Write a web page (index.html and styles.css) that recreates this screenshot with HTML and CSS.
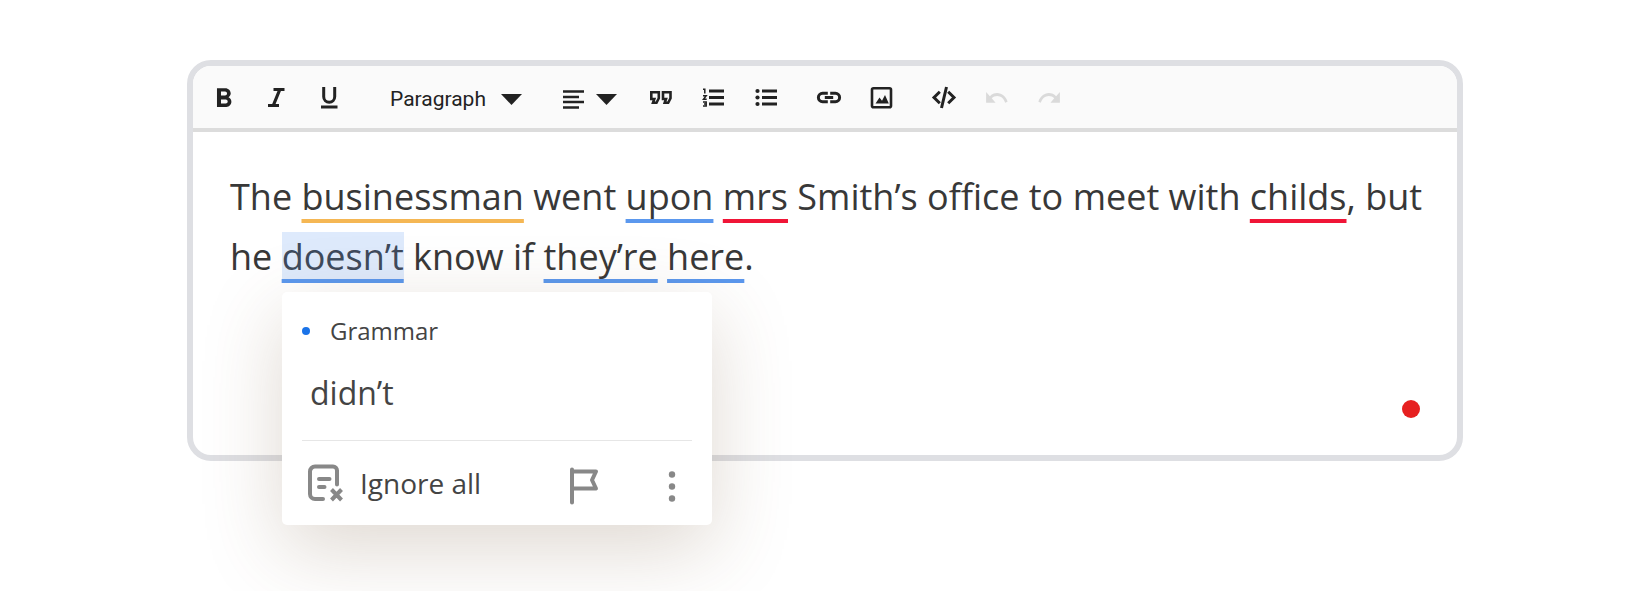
FILE: index.html
```html
<!DOCTYPE html>
<html lang="en">
<head>
<meta charset="utf-8">
<title>Editor</title>
<link rel="stylesheet" href="styles.css">
</head>
<body>
<main class="editor">
  <div class="toolbar" role="toolbar" aria-label="Formatting">
    <div class="group">
      <button class="tool" type="button" aria-label="Bold"><svg class="icon" viewBox="0 0 36 36"><path transform="translate(2.6 3.8) scale(1.34)" d="M15.6 10.79c.97-.67 1.65-1.77 1.65-2.79 0-2.26-1.75-4-4-4H7v14h7.04c2.09 0 3.71-1.7 3.71-3.79 0-1.52-.86-2.82-2.15-3.42zM10 6.5h3c.83 0 1.5.67 1.5 1.5s-.67 1.5-1.5 1.5h-3v-3zm3.5 9H10v-3h3.5c.83 0 1.5.67 1.5 1.5s-.67 1.5-1.5 1.5z"/></svg></button>
      <button class="tool" type="button" aria-label="Italic"><svg class="icon" viewBox="0 0 36 36"><path d="M15.5 9H26.500v3H22.900L17.600 25H21v3H10v-3h4.200L19.500 12h-4z"/></svg></button>
      <button class="tool" type="button" aria-label="Underline"><svg class="icon" viewBox="0 0 36 36"><path class="line thick" d="M12.700 8v9.700a5.500 5.500 0 0 0 11 0V8M10 28h16.500"/></svg></button>
    </div>
    <label class="style-picker">
      <select class="style-select" aria-label="Text style"><option>Paragraph</option></select>
      <svg class="caret" viewBox="0 0 21 12"><path d="M0 1h21L10.500 12z"/></svg>
    </label>
    <div class="group">
      <button class="align-tool" type="button" aria-label="Text alignment" aria-haspopup="true">
        <svg class="align-icon" viewBox="0 0 21 36"><path class="line" d="M0 12.500h21M0 18h16M0 23h21M0 28.500h16"/></svg>
        <svg class="caret" viewBox="0 0 21 12"><path d="M0 1h21L10.500 12z"/></svg>
      </button>
    </div>
    <div class="group">
      <button class="tool" type="button" aria-label="Block quote"><svg class="icon" viewBox="0 0 36 36"><path class="line" d="M8.300 13.300h7.500v6l-2.300 4.500h-3.500l1.300-3.800H8.300zM20 13.300h7.500v6l-2.300 4.500h-3.500l1.300-3.800H20z"/></svg></button>
      <button class="tool" type="button" aria-label="Numbered list"><svg class="icon" viewBox="0 0 36 36"><path class="line thick" d="M13 12h15M13 18.500h15M13 25h15"/><path class="line thin" d="M7 10.200h1.800v4.300M7 16.700h3.200l-2.700 3.600h3.200M7 23h3.200v4H7M8 25h2"/></svg></button>
      <button class="tool" type="button" aria-label="Bulleted list"><svg class="icon" viewBox="0 0 36 36"><path class="line thick" d="M13 12h15M13 18.500h15M13 25h15"/><circle cx="8.500" cy="12" r="2.100"/><circle cx="8.500" cy="18.500" r="2.100"/><circle cx="8.500" cy="25" r="2.100"/></svg></button>
    </div>
    <div class="group">
      <button class="tool" type="button" aria-label="Link"><svg class="icon" viewBox="0 0 36 36"><path class="line thick" d="M16.800 14.300h-5.200a4.200 4.200 0 0 0 0 8.400h5.200M19.200 14.300h5.200a4.200 4.200 0 0 1 0 8.400h-5.200M13.800 18.500h8.400"/></svg></button>
      <button class="tool" type="button" aria-label="Image"><svg class="icon" viewBox="0 0 36 36"><rect class="line" x="8" y="9.300" width="19" height="19" rx="1.500"/><path d="M11.500 24.500l4-6 2.500 3.200 3-5.700 3.800 8.500z"/></svg></button>
    </div>
    <div class="group">
      <button class="tool" type="button" aria-label="Source code"><svg class="icon" viewBox="0 0 36 36"><path class="line thick" d="M13.800 12.700L8 18.500l5.800 5.800M22.200 12.700l5.800 5.800-5.800 5.800M20.500 8l-5 21"/></svg></button>
      <button class="tool" type="button" aria-label="Undo" disabled><svg class="icon" viewBox="0 0 36 36"><path transform="translate(5 4.500) scale(1.050 1.200)" d="M12.500 8c-2.650 0-5.050.99-6.900 2.600L2 7v9h9l-3.620-3.620c1.390-1.160 3.160-1.880 5.120-1.880 3.540 0 6.550 2.310 7.600 5.500l2.370-.78C21.080 11.030 17.150 8 12.500 8z"/></svg></button>
      <button class="tool" type="button" aria-label="Redo" disabled><svg class="icon" viewBox="0 0 36 36"><path transform="translate(30 4.500) scale(-1.050 1.200)" d="M12.500 8c-2.650 0-5.050.99-6.900 2.600L2 7v9h9l-3.620-3.620c1.390-1.160 3.160-1.880 5.120-1.880 3.540 0 6.550 2.310 7.600 5.500l2.370-.78C21.080 11.030 17.150 8 12.500 8z"/></svg></button>
    </div>
  </div>
  <div class="content">
    <p class="text">The <span class="mark style">businessman</span> went <span class="mark grammar">upon</span> <span class="mark spelling">mrs</span> Smith’s office to meet with <span class="mark spelling">childs</span>, but he <span class="mark grammar active">doesn’t</span> know if <span class="mark grammar">they’re</span> <span class="mark grammar">here</span>.</p>
    <span class="status" role="status" aria-label="Problems found"></span>
  </div>
  <section class="popover" aria-label="Suggestion">
    <div class="category"><span class="dot"></span>Grammar</div>
    <button class="suggestion" type="button">didn’t</button>
    <div class="actions">
      <button class="ignore" type="button">
        <svg class="ignore-icon" viewBox="0 0 36 38"><path class="line bold" d="M16 35H8a5 5 0 0 1-5-5V7.500a5 5 0 0 1 5-5h18a4 4 0 0 1 4 4v14M12 15h10.500M12 23h5.500"/><path class="line bold cross" d="M24.500 25.500l10 10.500M34.500 25.500l-10 10.500"/></svg>
        Ignore all
      </button>
      <button class="action" type="button" aria-label="Report"><svg class="action-icon" viewBox="0 0 40 46"><path class="line bold" d="M8 9.500v33M8 11.500h24l-4 8.500 4 8.500H8"/></svg></button>
      <button class="action" type="button" aria-label="More options"><svg class="action-icon" viewBox="0 0 40 46"><circle cx="20" cy="14.500" r="3.200"/><circle cx="20" cy="26.500" r="3.200"/><circle cx="20" cy="38.500" r="3.200"/></svg></button>
    </div>
  </section>
</main>
</body>
</html>
```

FILE: styles.css
```css
* {
  box-sizing: border-box;
}

body {
  min-height: 100vh;
  margin: 0;
  padding: 60px 24px;
  background: #fff;
  color: #383838;
  font-family: "Open Sans", sans-serif;
}

button,
select {
  margin: 0;
  padding: 0;
  border: 0;
  background: none;
  color: inherit;
  font: inherit;
}

svg {
  display: block;
  flex: none;
  fill: currentColor;
}

.line {
  fill: none;
  stroke: currentColor;
  stroke-width: 2.600;
}

.thick {
  stroke-width: 3;
}

.thin {
  stroke-width: 1.500;
}

.bold {
  stroke-width: 4;
  stroke-linecap: round;
  stroke-linejoin: round;
}

.cross {
  stroke-linecap: butt;
}

.editor {
  position: relative;
  max-width: 1276px;
  margin: 0 auto;
  border: 6px solid #dedfe3;
  border-radius: 24px;
}

.toolbar {
  display: flex;
  align-items: center;
  gap: 26px;
  padding: 13px 12px;
  border-bottom: 4px solid #dcdcdc;
  border-radius: 18px 18px 0 0;
  background: #fafafa;
  color: #222;
}

.group {
  display: flex;
  gap: 17px;
}

.tool:disabled {
  color: #dadada;
}

.icon {
  width: 36px;
  height: 36px;
}

.style-picker {
  display: grid;
  grid-template-columns: auto 21px;
  align-items: center;
  padding: 0 15px 0 17px;
  font: 21px/28px Roboto, sans-serif;
}

.style-select {
  grid-area: 1 / 1 / 2 / 3;
  appearance: none;
  padding: 4px 36px 0 0;
}

.style-picker .caret {
  grid-area: 1 / 2;
  pointer-events: none;
}

.caret {
  width: 21px;
  height: 12px;
  margin-top: 3px;
}

.align-tool {
  display: flex;
  align-items: center;
  gap: 12px;
}

.align-icon {
  width: 21px;
  height: 36px;
}

.content {
  display: flex;
  flex-direction: column;
  justify-content: space-between;
  min-height: 323px;
  padding: 35px 24px 37px 37px;
}

.text {
  margin: 0;
  font-size: 36px;
  line-height: 60px;
}

.mark {
  text-decoration: underline 4px;
  text-decoration-skip-ink: none;
  text-underline-offset: 9px;
}

.style {
  text-decoration-color: #f5b754;
}

.grammar {
  text-decoration-color: #5b98ee;
}

.spelling {
  text-decoration-color: #f01537;
}

.active {
  background: #deeafc;
  color: #3e4a5c;
}

.status {
  align-self: flex-end;
  width: 18px;
  height: 18px;
  margin-right: 13px;
  border-radius: 50%;
  background: #e62020;
}

.popover {
  position: absolute;
  top: 226px;
  left: 89px;
  width: 430px;
  padding: 23px 20px;
  border-radius: 5px;
  background: #fff;
  box-shadow: 0 24px 80px rgba(110, 78, 45, 0.22);
  color: #444;
}

.category {
  display: flex;
  align-items: center;
  gap: 20px;
  font-size: 24px;
  line-height: 32px;
}

.dot {
  width: 8px;
  height: 8px;
  border-radius: 50%;
  background: #1a73e8;
}

.suggestion {
  display: block;
  margin: 24px 0 25px;
  padding: 0 8px;
  font-size: 32px;
  line-height: 44px;
}

.actions {
  display: flex;
  align-items: center;
  gap: 48px;
  padding-top: 23px;
  border-top: 1px solid #e6e6e6;
}

.ignore {
  display: flex;
  align-items: center;
  gap: 17px;
  margin-right: auto;
  padding-left: 5px;
  font-size: 28px;
  line-height: 38px;
}

.ignore-icon {
  width: 36px;
  height: 38px;
  color: #888;
}

.action {
  height: 38px;
  color: #888;
}

.action-icon {
  width: 40px;
  height: 46px;
  margin-top: -4px;
}
```
